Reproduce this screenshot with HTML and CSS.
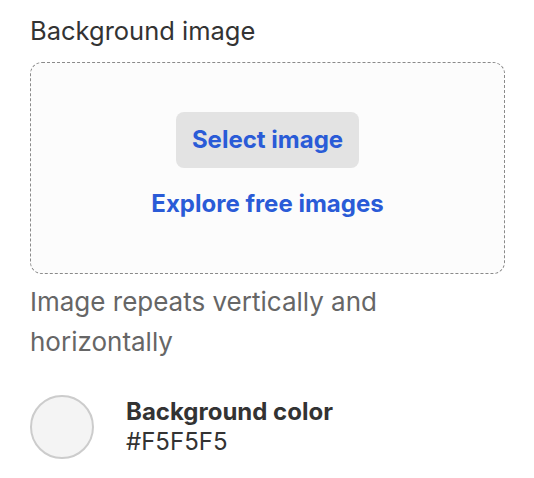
FILE: index.html
```html
<!DOCTYPE html>
<html>
<head>
<meta charset="utf-8">
<link rel="stylesheet" href="styles.css">
</head>
<body>
<div class="panel">
  <div class="title">Background image</div>
  <div class="dropzone">
    <button class="select-btn">Select image</button>
    <a class="explore" href="#">Explore free images</a>
  </div>
  <p class="hint">Image repeats vertically and horizontally</p>
  <div class="color-row">
    <div class="swatch"></div>
    <div class="color-info">
      <div class="color-label">Background color</div>
      <div class="color-value">#F5F5F5</div>
    </div>
  </div>
</div>
</body>
</html>
```
FILE: styles.css
```css
html, body {
  margin: 0;
  background: #ffffff;
}
body {
  font-family: Inter, "Noto Sans", sans-serif;
  font-size: 24px;
  color: #333333;
}
.panel {
  padding: 15px 29px 0 30px;
}
.title {
  font-size: 25.5px;
  line-height: 32px;
  margin-bottom: 15px;
  color: #333333;
}
.dropzone {
  border: 1px dashed #8a8a8a;
  border-radius: 12px;
  background: #fcfcfc;
  box-sizing: border-box;
  height: 212px;
  padding-top: 49px;
  display: flex;
  flex-direction: column;
  align-items: center;
}
.select-btn {
  font-family: inherit;
  font-size: 24px;
  font-weight: 700;
  color: #2a5bd7;
  background: #e3e3e3;
  border: none;
  border-radius: 8px;
  height: 56px;
  padding: 0 16px;
  line-height: 54px;
}
.explore {
  margin-top: 20px;
  font-weight: 700;
  color: #2a5bd7;
  text-decoration: none;
  line-height: 32px;
}
.hint {
  font-size: 26px;
  margin: 8px 0 0;
  line-height: 40px;
  color: #666666;
}
.color-row {
  margin-top: 33px;
  display: flex;
  align-items: center;
  gap: 32px;
}
.swatch {
  width: 60px;
  height: 60px;
  border-radius: 50%;
  border: 2px solid #cccccc;
  background: #f4f4f4;
  flex: none;
}
.color-info {
  line-height: 30px;
}
.color-label {
  font-weight: 700;
}
```
